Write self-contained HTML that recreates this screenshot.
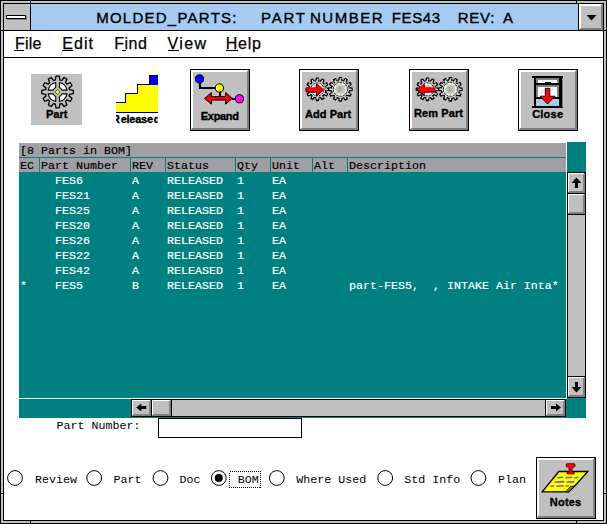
<!DOCTYPE html>
<html><head><meta charset="utf-8"><title>MOLDED_PARTS</title>
<style>
html,body{margin:0;padding:0;background:#fff;width:607px;height:524px;overflow:hidden}
svg{display:block;position:absolute;left:0;top:0}
.sans{font-family:"Liberation Sans",Arial,sans-serif}
.t16{font-size:16px;fill:#000}
.b11{font-size:11px;font-weight:bold;fill:#000;stroke:#000;stroke-width:0.35px}
.mono{font-family:"Liberation Mono","Courier New",monospace;font-size:11.667px;white-space:pre}
.ce{shape-rendering:crispEdges}
</style></head><body>
<svg width="607" height="524" viewBox="0 0 607 524">

<g class="ce">
<rect x="0" y="0" width="607" height="524" fill="#000" />
<rect x="1" y="1" width="605" height="522" fill="#c0c0c0" />
<rect x="3" y="3" width="601" height="518" fill="#000" />
<rect x="4" y="4" width="599" height="516" fill="#fff" />
<rect x="30" y="0" width="1" height="4" fill="#000" />
<rect x="576" y="0" width="1" height="4" fill="#000" />
<rect x="30" y="520" width="1" height="4" fill="#000" />
<rect x="576" y="520" width="1" height="4" fill="#000" />
<rect x="0" y="30" width="4" height="1" fill="#000" />
<rect x="0" y="493" width="4" height="1" fill="#000" />
<rect x="603" y="30" width="4" height="1" fill="#000" />
<rect x="603" y="493" width="4" height="1" fill="#000" />
<rect x="4" y="4" width="26" height="26" fill="#c0c0c0" />
<rect x="30" y="4" width="1" height="26" fill="#000" />
<rect x="31" y="4" width="547" height="26" fill="#a6caf0" />
<rect x="578" y="4" width="1" height="26" fill="#000" />
<rect x="4" y="30" width="599" height="1" fill="#000" />
<rect x="7" y="16" width="20" height="4" fill="#808080" />
<rect x="6" y="15" width="20" height="4" fill="#000" />
<rect x="7" y="16" width="18" height="2" fill="#fff" />
<rect x="579" y="4" width="24" height="26" fill="#c0c0c0" />
<rect x="579" y="4" width="24" height="2" fill="#fff" />
<rect x="579" y="4" width="2" height="26" fill="#fff" />
<rect x="601" y="5" width="2" height="25" fill="#808080" />
<rect x="580" y="28" width="23" height="2" fill="#808080" />
<rect x="602" y="4" width="1" height="1" fill="#808080" />
<rect x="579" y="29" width="1" height="1" fill="#808080" />
</g>
<polygon points="586.5,15 596.5,15 591.5,20.5" fill="#000"/>
<g class="ce">
<rect x="4" y="57" width="599" height="1" fill="#000" />
</g>
<text class="sans t16" x="96.2" y="22.6" textLength="140.3" lengthAdjust="spacing" stroke="#000" stroke-width="0.35" style="font-size:15px">MOLDED_PARTS:</text>
<text class="sans t16" x="261" y="22.6" textLength="44" lengthAdjust="spacing" stroke="#000" stroke-width="0.35" style="font-size:15px">PART</text>
<text class="sans t16" x="310" y="22.6" textLength="72.5" lengthAdjust="spacing" stroke="#000" stroke-width="0.35" style="font-size:15px">NUMBER</text>
<text class="sans t16" x="391.8" y="22.6" textLength="48.2" lengthAdjust="spacing" stroke="#000" stroke-width="0.35" style="font-size:15px">FES43</text>
<text class="sans t16" x="457.7" y="22.6" textLength="36.6" lengthAdjust="spacing" stroke="#000" stroke-width="0.35" style="font-size:15px">REV:</text>
<text class="sans t16" x="503" y="22.6" stroke="#000" stroke-width="0.35" style="font-size:15px">A</text>
<text class="sans t16" x="15" y="48.6" textLength="26.3" lengthAdjust="spacing" stroke="#000" stroke-width="0.25">File</text>
<text class="sans t16" x="62.2" y="48.6" textLength="30.8" lengthAdjust="spacing" stroke="#000" stroke-width="0.25">Edit</text>
<text class="sans t16" x="114.3" y="48.6" textLength="32.5" lengthAdjust="spacing" stroke="#000" stroke-width="0.25">Find</text>
<text class="sans t16" x="167.5" y="48.6" textLength="38.5" lengthAdjust="spacing" stroke="#000" stroke-width="0.25">View</text>
<text class="sans t16" x="225.8" y="48.6" textLength="35" lengthAdjust="spacing" stroke="#000" stroke-width="0.25">Help</text>
<g class="ce">
<rect x="14" y="50" width="10" height="1" fill="#000" />
<rect x="62" y="50" width="11" height="1" fill="#000" />
<rect x="122" y="50" width="4" height="1" fill="#000" />
<rect x="168" y="50" width="11" height="1" fill="#000" />
<rect x="226" y="50" width="12" height="1" fill="#000" />
</g>
<g class="ce">
<rect x="31" y="74" width="51" height="51" fill="#c0c0c0" />
</g>
<polygon points="55.31,80.02 56.02,76.18 59.18,76.18 59.89,80.02 61.61,80.48 64.14,77.51 66.88,79.09 65.57,82.76 66.84,84.03 70.51,82.72 72.09,85.46 69.12,87.99 69.58,89.71 73.42,90.42 73.42,93.58 69.58,94.29 69.12,96.01 72.09,98.54 70.51,101.28 66.84,99.97 65.57,101.24 66.88,104.91 64.14,106.49 61.61,103.52 59.89,103.98 59.18,107.82 56.02,107.82 55.31,103.98 53.59,103.52 51.06,106.49 48.32,104.91 49.63,101.24 48.36,99.97 44.69,101.28 43.11,98.54 46.08,96.01 45.62,94.29 41.78,93.58 41.78,90.42 45.62,89.71 46.08,87.99 43.11,85.46 44.69,82.72 48.36,84.03 49.63,82.76 48.32,79.09 51.06,77.51 53.59,80.48" fill="#c0c0c0" stroke="#000" stroke-width="1.3" stroke-linejoin="round" />
<path d="M67.02,93.83 A9.6,9.6 0 0 1 59.43,101.42 L59.43,96.44 A4.8,4.8 0 0 0 62.04,93.83 Z" fill="#fff" stroke="#000" stroke-width="1.1" stroke-linejoin="round"/>
<path d="M55.77,101.42 A9.6,9.6 0 0 1 48.18,93.83 L53.16,93.83 A4.8,4.8 0 0 0 55.77,96.44 Z" fill="#fff" stroke="#000" stroke-width="1.1" stroke-linejoin="round"/>
<path d="M48.18,90.17 A9.6,9.6 0 0 1 55.77,82.58 L55.77,87.56 A4.8,4.8 0 0 0 53.16,90.17 Z" fill="#fff" stroke="#000" stroke-width="1.1" stroke-linejoin="round"/>
<path d="M59.43,82.58 A9.6,9.6 0 0 1 67.02,90.17 L62.04,90.17 A4.8,4.8 0 0 0 59.43,87.56 Z" fill="#fff" stroke="#000" stroke-width="1.1" stroke-linejoin="round"/>
<polygon points="57.6,89.4 60,92 57.6,94.6 55.2,92" fill="#ffff00" stroke="#404000" stroke-width="0.8"/>
<text class="sans b11" x="46" y="117.6" textLength="21.5" lengthAdjust="spacing" >Part</text>
<g class="ce">
<rect x="116" y="75" width="42" height="38" fill="#fff" />
<polygon points="116,103 126,103 126,94 138,94 138,85 158,85 158,112 116,112" fill="#ffff00"/>
<rect x="150" y="76" width="8" height="9" fill="#0000ff" />
<rect x="116" y="102" width="10" height="1" fill="#000" />
<rect x="125" y="93" width="1" height="10" fill="#000" />
<rect x="125" y="93" width="13" height="1" fill="#000" />
<rect x="137" y="84" width="1" height="10" fill="#000" />
<rect x="137" y="84" width="13" height="1" fill="#000" />
<rect x="149" y="75" width="1" height="10" fill="#000" />
<rect x="149" y="75" width="9" height="1" fill="#000" />
<rect x="116" y="112" width="42" height="1" fill="#000" />
</g>
<clipPath id="rc"><rect x="116" y="113" width="41.8" height="14"/></clipPath>
<g clip-path="url(#rc)">
<text class="sans b11" x="112 120.8 126.5 129.3 135.3 141.1 147 153.8" y="122.8">Released</text>
</g>
<g class="ce">
<rect x="190" y="69" width="60" height="62" fill="#000" />
<rect x="191" y="70" width="58" height="60" fill="#c0c0c0" />
<rect x="191" y="70" width="57" height="2" fill="#fff" />
<rect x="191" y="70" width="2" height="59" fill="#fff" />
<rect x="247" y="71" width="2" height="59" fill="#808080" />
<rect x="192" y="128" width="56" height="2" fill="#808080" />
<rect x="248" y="70" width="1" height="1" fill="#808080" />
<rect x="191" y="129" width="1" height="1" fill="#808080" />
</g>
<g stroke="#000" stroke-width="2" fill="none" class="ce"><path d="M200,80 V88 H216"/><path d="M220,90 V96"/><path d="M232,99 H238"/></g>
<circle cx="199.5" cy="78.9" r="4.1" fill="#0000ff" stroke="#000" stroke-width="1"/>
<circle cx="219.4" cy="88" r="4.1" fill="#ffff00" stroke="#000" stroke-width="1"/>
<circle cx="239.5" cy="98.8" r="4.1" fill="#ff00ff" stroke="#000" stroke-width="1"/>
<polygon points="204.6,98.4 211.4,92.6 211.4,96.7 225.7,96.7 225.7,92.6 232.2,98.4 225.7,104.2 225.7,100.1 211.4,100.1 211.4,104.2" fill="#ff0000" stroke="#000" stroke-width="1" stroke-linejoin="miter"/>
<text class="sans b11" x="200.8" y="119.6" textLength="38.2" lengthAdjust="spacing" >Expand</text>
<g class="ce">
<rect x="299" y="69" width="60" height="62" fill="#000" />
<rect x="300" y="70" width="58" height="60" fill="#c0c0c0" />
<rect x="300" y="70" width="57" height="2" fill="#fff" />
<rect x="300" y="70" width="2" height="59" fill="#fff" />
<rect x="356" y="71" width="2" height="59" fill="#808080" />
<rect x="301" y="128" width="56" height="2" fill="#808080" />
<rect x="357" y="70" width="1" height="1" fill="#808080" />
<rect x="300" y="129" width="1" height="1" fill="#808080" />
</g>
<polygon points="315.91,81.03 316.35,78.15 318.45,78.15 318.89,81.03 320.25,81.40 322.06,79.12 323.89,80.17 322.82,82.88 323.82,83.88 326.53,82.81 327.58,84.64 325.30,86.45 325.67,87.81 328.55,88.25 328.55,90.35 325.67,90.79 325.30,92.15 327.58,93.96 326.53,95.79 323.82,94.72 322.82,95.72 323.89,98.43 322.06,99.48 320.25,97.20 318.89,97.57 318.45,100.45 316.35,100.45 315.91,97.57 314.55,97.20 312.74,99.48 310.91,98.43 311.98,95.72 310.98,94.72 308.27,95.79 307.22,93.96 309.50,92.15 309.13,90.79 306.25,90.35 306.25,88.25 309.13,87.81 309.50,86.45 307.22,84.64 308.27,82.81 310.98,83.88 311.98,82.88 310.91,80.17 312.74,79.12 314.55,81.40" fill="#cccccc" stroke="#000" stroke-width="1.35" stroke-linejoin="round" />
<polygon points="316.26,81.78 316.81,79.09 318.49,79.09 319.04,81.78 320.08,82.06 321.91,80.00 323.36,80.84 322.49,83.45 323.25,84.21 325.86,83.34 326.70,84.79 324.64,86.62 324.92,87.66 327.61,88.21 327.61,89.89 324.92,90.44 324.64,91.48 326.70,93.31 325.86,94.76 323.25,93.89 322.49,94.65 323.36,97.26 321.91,98.10 320.08,96.04 319.04,96.32 318.49,99.01 316.81,99.01 316.26,96.32 315.22,96.04 313.39,98.10 311.94,97.26 312.81,94.65 312.05,93.89 309.44,94.76 308.60,93.31 310.66,91.48 310.38,90.44 307.69,89.89 307.69,88.21 310.38,87.66 310.66,86.62 308.60,84.79 309.44,83.34 312.05,84.21 312.81,83.45 311.94,80.84 313.39,80.00 315.22,82.06" fill="none" stroke="#fff" stroke-width="0.7" stroke-linejoin="round" stroke-dasharray="1.4 2.2"/>
<circle cx="317.4" cy="89.3" r="6.500000000000001" fill="none" stroke="#000" stroke-width="0.9" stroke-dasharray="2.2 1"/>
<circle cx="317.4" cy="89.3" r="5.000000000000001" fill="none" stroke="#fff" stroke-width="1.9" stroke-dasharray="2.36 1.57" stroke-dashoffset="-0.79"/>
<circle cx="317.4" cy="89.3" r="4.000000000000001" fill="#c0c0c0"/>
<polygon points="338.82,80.54 339.30,77.65 341.50,77.65 341.98,80.54 343.41,80.93 345.27,78.66 347.18,79.76 346.14,82.50 347.20,83.56 349.94,82.52 351.04,84.43 348.77,86.29 349.16,87.72 352.05,88.20 352.05,90.40 349.16,90.88 348.77,92.31 351.04,94.17 349.94,96.08 347.20,95.04 346.14,96.10 347.18,98.84 345.27,99.94 343.41,97.67 341.98,98.06 341.50,100.95 339.30,100.95 338.82,98.06 337.39,97.67 335.53,99.94 333.62,98.84 334.66,96.10 333.60,95.04 330.86,96.08 329.76,94.17 332.03,92.31 331.64,90.88 328.75,90.40 328.75,88.20 331.64,87.72 332.03,86.29 329.76,84.43 330.86,82.52 333.60,83.56 334.66,82.50 333.62,79.76 335.53,78.66 337.39,80.93" fill="#cccccc" stroke="#000" stroke-width="1.35" stroke-linejoin="round" />
<polygon points="339.17,81.29 339.77,78.59 341.53,78.59 342.13,81.29 343.25,81.59 345.12,79.55 346.64,80.43 345.81,83.07 346.63,83.89 349.27,83.06 350.15,84.58 348.11,86.45 348.41,87.57 351.11,88.17 351.11,89.93 348.41,90.53 348.11,91.65 350.15,93.52 349.27,95.04 346.63,94.21 345.81,95.03 346.64,97.67 345.12,98.55 343.25,96.51 342.13,96.81 341.53,99.51 339.77,99.51 339.17,96.81 338.05,96.51 336.18,98.55 334.66,97.67 335.49,95.03 334.67,94.21 332.03,95.04 331.15,93.52 333.19,91.65 332.89,90.53 330.19,89.93 330.19,88.17 332.89,87.57 333.19,86.45 331.15,84.58 332.03,83.06 334.67,83.89 335.49,83.07 334.66,80.43 336.18,79.55 338.05,81.59" fill="none" stroke="#fff" stroke-width="0.7" stroke-linejoin="round" stroke-dasharray="1.4 2.2"/>
<circle cx="340.4" cy="89.3" r="7.000000000000001" fill="none" stroke="#000" stroke-width="0.9" stroke-dasharray="2.2 1"/>
<circle cx="340.4" cy="89.3" r="5.500000000000001" fill="none" stroke="#fff" stroke-width="1.9" stroke-dasharray="2.59 1.73" stroke-dashoffset="-0.86"/>
<circle cx="340.4" cy="89.3" r="4.500000000000001" fill="#c0c0c0"/>
<polygon points="339.2,87.5 341.6,89.4 339.2,91.3" fill="#ffff00" stroke="#606000" stroke-width="0.5"/>
<polygon points="306.5,87.6 316.8,87.6 316.8,83.2 323.8,89.5 316.8,95.2 316.8,91.5 306.5,91.5" fill="#000" stroke="#000" stroke-width="1" transform="translate(-0.3,0.6)"/>
<polygon points="306.5,87.6 316.8,87.6 316.8,83.2 323.8,89.5 316.8,95.2 316.8,91.5 306.5,91.5" fill="#ff0000"/>
<text class="sans b11" x="305.1" y="117.8" textLength="46" lengthAdjust="spacing" >Add Part</text>
<g class="ce">
<rect x="409" y="69" width="60" height="62" fill="#000" />
<rect x="410" y="70" width="58" height="60" fill="#c0c0c0" />
<rect x="410" y="70" width="57" height="2" fill="#fff" />
<rect x="410" y="70" width="2" height="59" fill="#fff" />
<rect x="466" y="71" width="2" height="59" fill="#808080" />
<rect x="411" y="128" width="56" height="2" fill="#808080" />
<rect x="467" y="70" width="1" height="1" fill="#808080" />
<rect x="410" y="129" width="1" height="1" fill="#808080" />
</g>
<polygon points="425.91,81.03 426.35,78.15 428.45,78.15 428.89,81.03 430.25,81.40 432.06,79.12 433.89,80.17 432.82,82.88 433.82,83.88 436.53,82.81 437.58,84.64 435.30,86.45 435.67,87.81 438.55,88.25 438.55,90.35 435.67,90.79 435.30,92.15 437.58,93.96 436.53,95.79 433.82,94.72 432.82,95.72 433.89,98.43 432.06,99.48 430.25,97.20 428.89,97.57 428.45,100.45 426.35,100.45 425.91,97.57 424.55,97.20 422.74,99.48 420.91,98.43 421.98,95.72 420.98,94.72 418.27,95.79 417.22,93.96 419.50,92.15 419.13,90.79 416.25,90.35 416.25,88.25 419.13,87.81 419.50,86.45 417.22,84.64 418.27,82.81 420.98,83.88 421.98,82.88 420.91,80.17 422.74,79.12 424.55,81.40" fill="#cccccc" stroke="#000" stroke-width="1.35" stroke-linejoin="round" />
<polygon points="426.26,81.78 426.81,79.09 428.49,79.09 429.04,81.78 430.08,82.06 431.91,80.00 433.36,80.84 432.49,83.45 433.25,84.21 435.86,83.34 436.70,84.79 434.64,86.62 434.92,87.66 437.61,88.21 437.61,89.89 434.92,90.44 434.64,91.48 436.70,93.31 435.86,94.76 433.25,93.89 432.49,94.65 433.36,97.26 431.91,98.10 430.08,96.04 429.04,96.32 428.49,99.01 426.81,99.01 426.26,96.32 425.22,96.04 423.39,98.10 421.94,97.26 422.81,94.65 422.05,93.89 419.44,94.76 418.60,93.31 420.66,91.48 420.38,90.44 417.69,89.89 417.69,88.21 420.38,87.66 420.66,86.62 418.60,84.79 419.44,83.34 422.05,84.21 422.81,83.45 421.94,80.84 423.39,80.00 425.22,82.06" fill="none" stroke="#fff" stroke-width="0.7" stroke-linejoin="round" stroke-dasharray="1.4 2.2"/>
<circle cx="427.4" cy="89.3" r="6.500000000000001" fill="none" stroke="#000" stroke-width="0.9" stroke-dasharray="2.2 1"/>
<circle cx="427.4" cy="89.3" r="5.000000000000001" fill="none" stroke="#fff" stroke-width="1.9" stroke-dasharray="2.36 1.57" stroke-dashoffset="-0.79"/>
<circle cx="427.4" cy="89.3" r="4.000000000000001" fill="#c0c0c0"/>
<polygon points="448.82,80.54 449.30,77.65 451.50,77.65 451.98,80.54 453.41,80.93 455.27,78.66 457.18,79.76 456.14,82.50 457.20,83.56 459.94,82.52 461.04,84.43 458.77,86.29 459.16,87.72 462.05,88.20 462.05,90.40 459.16,90.88 458.77,92.31 461.04,94.17 459.94,96.08 457.20,95.04 456.14,96.10 457.18,98.84 455.27,99.94 453.41,97.67 451.98,98.06 451.50,100.95 449.30,100.95 448.82,98.06 447.39,97.67 445.53,99.94 443.62,98.84 444.66,96.10 443.60,95.04 440.86,96.08 439.76,94.17 442.03,92.31 441.64,90.88 438.75,90.40 438.75,88.20 441.64,87.72 442.03,86.29 439.76,84.43 440.86,82.52 443.60,83.56 444.66,82.50 443.62,79.76 445.53,78.66 447.39,80.93" fill="#cccccc" stroke="#000" stroke-width="1.35" stroke-linejoin="round" />
<polygon points="449.17,81.29 449.77,78.59 451.53,78.59 452.13,81.29 453.25,81.59 455.12,79.55 456.64,80.43 455.81,83.07 456.63,83.89 459.27,83.06 460.15,84.58 458.11,86.45 458.41,87.57 461.11,88.17 461.11,89.93 458.41,90.53 458.11,91.65 460.15,93.52 459.27,95.04 456.63,94.21 455.81,95.03 456.64,97.67 455.12,98.55 453.25,96.51 452.13,96.81 451.53,99.51 449.77,99.51 449.17,96.81 448.05,96.51 446.18,98.55 444.66,97.67 445.49,95.03 444.67,94.21 442.03,95.04 441.15,93.52 443.19,91.65 442.89,90.53 440.19,89.93 440.19,88.17 442.89,87.57 443.19,86.45 441.15,84.58 442.03,83.06 444.67,83.89 445.49,83.07 444.66,80.43 446.18,79.55 448.05,81.59" fill="none" stroke="#fff" stroke-width="0.7" stroke-linejoin="round" stroke-dasharray="1.4 2.2"/>
<circle cx="450.4" cy="89.3" r="7.000000000000001" fill="none" stroke="#000" stroke-width="0.9" stroke-dasharray="2.2 1"/>
<circle cx="450.4" cy="89.3" r="5.500000000000001" fill="none" stroke="#fff" stroke-width="1.9" stroke-dasharray="2.59 1.73" stroke-dashoffset="-0.86"/>
<circle cx="450.4" cy="89.3" r="4.500000000000001" fill="#c0c0c0"/>
<polygon points="449.2,87.5 451.6,89.4 449.2,91.3" fill="#ffff00" stroke="#606000" stroke-width="0.5"/>
<polygon points="435,87.6 424.5,87.6 424.5,83.6 417.3,89.4 424.5,95 424.5,91.5 435,91.5" fill="#000" stroke="#000" stroke-width="1" transform="translate(-0.3,0.6)"/>
<polygon points="435,87.6 424.5,87.6 424.5,83.6 417.3,89.4 424.5,95 424.5,91.5 435,91.5" fill="#ff0000"/>
<text class="sans b11" x="414" y="116.8" textLength="49" lengthAdjust="spacing" >Rem Part</text>
<g class="ce">
<rect x="518" y="69" width="60" height="62" fill="#000" />
<rect x="519" y="70" width="58" height="60" fill="#c0c0c0" />
<rect x="519" y="70" width="57" height="2" fill="#fff" />
<rect x="519" y="70" width="2" height="59" fill="#fff" />
<rect x="575" y="71" width="2" height="59" fill="#808080" />
<rect x="520" y="128" width="56" height="2" fill="#808080" />
<rect x="576" y="70" width="1" height="1" fill="#808080" />
<rect x="519" y="129" width="1" height="1" fill="#808080" />
</g>
<g class="ce">
<rect x="532" y="76" width="31" height="2" fill="#000" />
<rect x="532" y="106" width="31" height="2" fill="#000" />
<rect x="562" y="78" width="1" height="29" fill="#808080" />
<rect x="534" y="78" width="28" height="28" fill="#000" />
<rect x="536" y="78" width="23" height="28" fill="#808080" />
<rect x="538" y="80" width="19" height="3" fill="#fff" />
<rect x="545" y="82" width="6" height="1" fill="#000" />
<rect x="536" y="83" width="23" height="2" fill="#000" />
<rect x="538" y="87" width="19" height="10" fill="#fff" />
<rect x="536" y="97" width="23" height="2" fill="#000" />
<rect x="536" y="99" width="23" height="7" fill="#a6caf0" />
</g>
<g stroke="#a6caf0" stroke-width="0.8"><line x1="541.5" y1="82.8" x2="543.5" y2="80.2"/><line x1="551" y1="82.8" x2="553.5" y2="80"/><line x1="540.5" y1="93.5" x2="543.5" y2="90"/><line x1="551" y1="91.5" x2="553.5" y2="88.5"/></g>
<polygon points="545.3,88.3 549.8,88.3 549.8,96.2 555,96.2 547.5,104 540,96.2 545.3,96.2" fill="#ff0000" stroke="#000" stroke-width="0.9" stroke-linejoin="miter"/>
<text class="sans b11" x="532.2" y="118.2" textLength="30.8" lengthAdjust="spacing" >Close</text>
<g class="ce">
<rect x="19" y="143" width="567" height="275" fill="#008080" />
<rect x="567" y="142" width="19" height="2" fill="#008080" />
<rect x="19" y="143" width="547" height="29" fill="#a0a0a4" />
<rect x="19" y="157" width="547" height="1" fill="#008080" />
<rect x="39" y="158" width="1" height="14" fill="#008080" />
<rect x="130" y="158" width="1" height="14" fill="#008080" />
<rect x="165" y="158" width="1" height="14" fill="#008080" />
<rect x="235" y="158" width="1" height="14" fill="#008080" />
<rect x="270" y="158" width="1" height="14" fill="#008080" />
<rect x="312" y="158" width="1" height="14" fill="#008080" />
<rect x="347" y="158" width="1" height="14" fill="#008080" />
<rect x="566" y="142" width="1" height="257" fill="#fff" />
<rect x="19" y="398" width="548" height="1" fill="#fff" />
</g>
<text class="mono" x="20" y="154" fill="#000" stroke="#000" stroke-width="0.18" xml:space="preserve">[8 Parts in BOM]</text>
<text class="mono" x="20" y="169" fill="#000" stroke="#000" stroke-width="0.18" xml:space="preserve">EC</text>
<text class="mono" x="41" y="169" fill="#000" stroke="#000" stroke-width="0.18" xml:space="preserve">Part Number</text>
<text class="mono" x="132" y="169" fill="#000" stroke="#000" stroke-width="0.18" xml:space="preserve">REV</text>
<text class="mono" x="167" y="169" fill="#000" stroke="#000" stroke-width="0.18" xml:space="preserve">Status</text>
<text class="mono" x="237" y="169" fill="#000" stroke="#000" stroke-width="0.18" xml:space="preserve">Qty</text>
<text class="mono" x="272" y="169" fill="#000" stroke="#000" stroke-width="0.18" xml:space="preserve">Unit</text>
<text class="mono" x="314" y="169" fill="#000" stroke="#000" stroke-width="0.18" xml:space="preserve">Alt</text>
<text class="mono" x="349" y="169" fill="#000" stroke="#000" stroke-width="0.18" xml:space="preserve">Description</text>
<text class="mono" x="55" y="184" fill="#fff" stroke="#fff" stroke-width="0.18" xml:space="preserve">FES6</text>
<text class="mono" x="132" y="184" fill="#fff" stroke="#fff" stroke-width="0.18" xml:space="preserve">A</text>
<text class="mono" x="167" y="184" fill="#fff" stroke="#fff" stroke-width="0.18" xml:space="preserve">RELEASED</text>
<text class="mono" x="237" y="184" fill="#fff" stroke="#fff" stroke-width="0.18" xml:space="preserve">1</text>
<text class="mono" x="272" y="184" fill="#fff" stroke="#fff" stroke-width="0.18" xml:space="preserve">EA</text>
<text class="mono" x="55" y="199" fill="#fff" stroke="#fff" stroke-width="0.18" xml:space="preserve">FES21</text>
<text class="mono" x="132" y="199" fill="#fff" stroke="#fff" stroke-width="0.18" xml:space="preserve">A</text>
<text class="mono" x="167" y="199" fill="#fff" stroke="#fff" stroke-width="0.18" xml:space="preserve">RELEASED</text>
<text class="mono" x="237" y="199" fill="#fff" stroke="#fff" stroke-width="0.18" xml:space="preserve">1</text>
<text class="mono" x="272" y="199" fill="#fff" stroke="#fff" stroke-width="0.18" xml:space="preserve">EA</text>
<text class="mono" x="55" y="214" fill="#fff" stroke="#fff" stroke-width="0.18" xml:space="preserve">FES25</text>
<text class="mono" x="132" y="214" fill="#fff" stroke="#fff" stroke-width="0.18" xml:space="preserve">A</text>
<text class="mono" x="167" y="214" fill="#fff" stroke="#fff" stroke-width="0.18" xml:space="preserve">RELEASED</text>
<text class="mono" x="237" y="214" fill="#fff" stroke="#fff" stroke-width="0.18" xml:space="preserve">1</text>
<text class="mono" x="272" y="214" fill="#fff" stroke="#fff" stroke-width="0.18" xml:space="preserve">EA</text>
<text class="mono" x="55" y="229" fill="#fff" stroke="#fff" stroke-width="0.18" xml:space="preserve">FES20</text>
<text class="mono" x="132" y="229" fill="#fff" stroke="#fff" stroke-width="0.18" xml:space="preserve">A</text>
<text class="mono" x="167" y="229" fill="#fff" stroke="#fff" stroke-width="0.18" xml:space="preserve">RELEASED</text>
<text class="mono" x="237" y="229" fill="#fff" stroke="#fff" stroke-width="0.18" xml:space="preserve">1</text>
<text class="mono" x="272" y="229" fill="#fff" stroke="#fff" stroke-width="0.18" xml:space="preserve">EA</text>
<text class="mono" x="55" y="244" fill="#fff" stroke="#fff" stroke-width="0.18" xml:space="preserve">FES26</text>
<text class="mono" x="132" y="244" fill="#fff" stroke="#fff" stroke-width="0.18" xml:space="preserve">A</text>
<text class="mono" x="167" y="244" fill="#fff" stroke="#fff" stroke-width="0.18" xml:space="preserve">RELEASED</text>
<text class="mono" x="237" y="244" fill="#fff" stroke="#fff" stroke-width="0.18" xml:space="preserve">1</text>
<text class="mono" x="272" y="244" fill="#fff" stroke="#fff" stroke-width="0.18" xml:space="preserve">EA</text>
<text class="mono" x="55" y="259" fill="#fff" stroke="#fff" stroke-width="0.18" xml:space="preserve">FES22</text>
<text class="mono" x="132" y="259" fill="#fff" stroke="#fff" stroke-width="0.18" xml:space="preserve">A</text>
<text class="mono" x="167" y="259" fill="#fff" stroke="#fff" stroke-width="0.18" xml:space="preserve">RELEASED</text>
<text class="mono" x="237" y="259" fill="#fff" stroke="#fff" stroke-width="0.18" xml:space="preserve">1</text>
<text class="mono" x="272" y="259" fill="#fff" stroke="#fff" stroke-width="0.18" xml:space="preserve">EA</text>
<text class="mono" x="55" y="274" fill="#fff" stroke="#fff" stroke-width="0.18" xml:space="preserve">FES42</text>
<text class="mono" x="132" y="274" fill="#fff" stroke="#fff" stroke-width="0.18" xml:space="preserve">A</text>
<text class="mono" x="167" y="274" fill="#fff" stroke="#fff" stroke-width="0.18" xml:space="preserve">RELEASED</text>
<text class="mono" x="237" y="274" fill="#fff" stroke="#fff" stroke-width="0.18" xml:space="preserve">1</text>
<text class="mono" x="272" y="274" fill="#fff" stroke="#fff" stroke-width="0.18" xml:space="preserve">EA</text>
<text class="mono" x="55" y="289" fill="#fff" stroke="#fff" stroke-width="0.18" xml:space="preserve">FES5</text>
<text class="mono" x="132" y="289" fill="#fff" stroke="#fff" stroke-width="0.18" xml:space="preserve">B</text>
<text class="mono" x="167" y="289" fill="#fff" stroke="#fff" stroke-width="0.18" xml:space="preserve">RELEASED</text>
<text class="mono" x="237" y="289" fill="#fff" stroke="#fff" stroke-width="0.18" xml:space="preserve">1</text>
<text class="mono" x="272" y="289" fill="#fff" stroke="#fff" stroke-width="0.18" xml:space="preserve">EA</text>
<text class="mono" x="20" y="289" fill="#fff" stroke="#fff" stroke-width="0.18" xml:space="preserve">*</text>
<text class="mono" x="349" y="289" fill="#fff" stroke="#fff" stroke-width="0.18" xml:space="preserve">part-FES5,  , INTAKE Air Inta*</text>
<g class="ce">
<rect x="567" y="172" width="19" height="226" fill="#000" />
<rect x="568" y="173" width="17" height="224" fill="#c0c0c0" />
<rect x="568" y="173" width="17" height="20" fill="#c0c0c0" />
<rect x="568" y="173" width="16" height="1" fill="#fff" />
<rect x="568" y="173" width="1" height="19" fill="#fff" />
<rect x="583" y="174" width="2" height="19" fill="#808080" />
<rect x="569" y="191" width="16" height="2" fill="#808080" />
<rect x="584" y="173" width="1" height="1" fill="#808080" />
<rect x="568" y="192" width="1" height="1" fill="#808080" />
<rect x="568" y="193" width="17" height="1" fill="#000" />
<rect x="568" y="194" width="17" height="20" fill="#c0c0c0" />
<rect x="568" y="194" width="16" height="1" fill="#fff" />
<rect x="568" y="194" width="1" height="19" fill="#fff" />
<rect x="583" y="195" width="2" height="19" fill="#808080" />
<rect x="569" y="212" width="16" height="2" fill="#808080" />
<rect x="584" y="194" width="1" height="1" fill="#808080" />
<rect x="568" y="213" width="1" height="1" fill="#808080" />
<rect x="568" y="214" width="17" height="1" fill="#000" />
<rect x="568" y="376" width="17" height="1" fill="#000" />
<rect x="568" y="377" width="17" height="20" fill="#c0c0c0" />
<rect x="568" y="377" width="16" height="1" fill="#fff" />
<rect x="568" y="377" width="1" height="19" fill="#fff" />
<rect x="583" y="378" width="2" height="19" fill="#808080" />
<rect x="569" y="395" width="16" height="2" fill="#808080" />
<rect x="584" y="377" width="1" height="1" fill="#808080" />
<rect x="568" y="396" width="1" height="1" fill="#808080" />
<rect x="131" y="399" width="435" height="18" fill="#000" />
<rect x="132" y="400" width="433" height="16" fill="#c0c0c0" />
<rect x="132" y="400" width="19" height="16" fill="#c0c0c0" />
<rect x="132" y="400" width="18" height="1" fill="#fff" />
<rect x="132" y="400" width="1" height="15" fill="#fff" />
<rect x="149" y="401" width="2" height="15" fill="#808080" />
<rect x="133" y="414" width="18" height="2" fill="#808080" />
<rect x="150" y="400" width="1" height="1" fill="#808080" />
<rect x="132" y="415" width="1" height="1" fill="#808080" />
<rect x="151" y="400" width="1" height="16" fill="#000" />
<rect x="152" y="400" width="19" height="16" fill="#c0c0c0" />
<rect x="152" y="400" width="18" height="1" fill="#fff" />
<rect x="152" y="400" width="1" height="15" fill="#fff" />
<rect x="169" y="401" width="2" height="15" fill="#808080" />
<rect x="153" y="414" width="18" height="2" fill="#808080" />
<rect x="170" y="400" width="1" height="1" fill="#808080" />
<rect x="152" y="415" width="1" height="1" fill="#808080" />
<rect x="171" y="400" width="1" height="16" fill="#000" />
<rect x="545" y="400" width="1" height="16" fill="#000" />
<rect x="546" y="400" width="19" height="16" fill="#c0c0c0" />
<rect x="546" y="400" width="18" height="1" fill="#fff" />
<rect x="546" y="400" width="1" height="15" fill="#fff" />
<rect x="563" y="401" width="2" height="15" fill="#808080" />
<rect x="547" y="414" width="18" height="2" fill="#808080" />
<rect x="564" y="400" width="1" height="1" fill="#808080" />
<rect x="546" y="415" width="1" height="1" fill="#808080" />
</g>
<polygon points="576.5,177.5 581.5,183 578,183 578,188 575,188 575,183 571.5,183" fill="#000"/>
<polygon points="576.5,392.5 581.5,387 578,387 578,382 575,382 575,387 571.5,387" fill="#000"/>
<polygon points="136.3,407.5 141.3,403.5 141.3,406 146.3,406 146.3,409 141.3,409 141.3,411.5" fill="#000"/>
<polygon points="561,407.5 556,403.5 556,406 551,406 551,409 556,409 556,411.5" fill="#000"/>
<text class="mono" x="56.5" y="429" fill="#000" xml:space="preserve">Part Number:</text>
<g class="ce">
<rect x="158" y="418" width="144" height="20" fill="#000" />
<rect x="159" y="419" width="142" height="18" fill="#fff" />
</g>
<circle cx="15" cy="478" r="7.4" fill="#fff" stroke="#000" stroke-width="1"/>
<text class="mono" x="35" y="483" fill="#000" xml:space="preserve">Review</text>
<circle cx="94.2" cy="478" r="7.4" fill="#fff" stroke="#000" stroke-width="1"/>
<text class="mono" x="113.5" y="483" fill="#000" xml:space="preserve">Part</text>
<circle cx="160.5" cy="478" r="7.4" fill="#fff" stroke="#000" stroke-width="1"/>
<text class="mono" x="179.5" y="483" fill="#000" xml:space="preserve">Doc</text>
<circle cx="218.8" cy="478" r="7.4" fill="#fff" stroke="#000" stroke-width="1"/>
<text class="mono" x="237.7" y="483" fill="#000" xml:space="preserve">BOM</text>
<circle cx="276.8" cy="478" r="7.4" fill="#fff" stroke="#000" stroke-width="1"/>
<text class="mono" x="296.3" y="483" fill="#000" xml:space="preserve">Where Used</text>
<circle cx="385.2" cy="478" r="7.4" fill="#fff" stroke="#000" stroke-width="1"/>
<text class="mono" x="404.3" y="483" fill="#000" xml:space="preserve">Std Info</text>
<circle cx="478.4" cy="478" r="7.4" fill="#fff" stroke="#000" stroke-width="1"/>
<text class="mono" x="498" y="483" fill="#000" xml:space="preserve">Plan</text>
<circle cx="218.8" cy="478" r="4" fill="#000"/>
<rect x="229.5" y="471.5" width="31" height="16" fill="none" stroke="#000" stroke-width="1" stroke-dasharray="1 1" class="ce"/>
<g class="ce">
<rect x="536" y="457" width="60" height="62" fill="#000" />
<rect x="537" y="458" width="58" height="60" fill="#c0c0c0" />
<rect x="537" y="458" width="57" height="2" fill="#fff" />
<rect x="537" y="458" width="2" height="59" fill="#fff" />
<rect x="593" y="459" width="2" height="59" fill="#808080" />
<rect x="538" y="516" width="56" height="2" fill="#808080" />
<rect x="594" y="458" width="1" height="1" fill="#808080" />
<rect x="537" y="517" width="1" height="1" fill="#808080" />
</g>
<polygon points="558.8,471.5 587.8,471.5 575,485.8 568.6,491.8 542.2,491.8" fill="#ffff00" stroke="#000" stroke-width="1.3" stroke-linejoin="miter"/>
<polygon points="565.5,491.8 570.5,486.6 575.2,485.6 568.8,491.8" fill="#808000" stroke="#000" stroke-width="0.7"/>
<g stroke="#6868a8" stroke-width="1.6">
<line x1="557.4" y1="477.8" x2="562.9" y2="477.2"/>
<line x1="565.7" y1="477.8" x2="572.1" y2="477.2"/>
<line x1="574.4" y1="477.8" x2="578.6" y2="477.2"/>
<line x1="554.6" y1="482.2" x2="564.3" y2="481.59999999999997"/>
<line x1="566.6" y1="482.2" x2="574.4" y2="481.59999999999997"/>
<line x1="550.5" y1="486.3" x2="554.1" y2="485.7"/>
<line x1="556.5" y1="486.3" x2="563.8" y2="485.7"/>
<line x1="565.7" y1="486.3" x2="568.9" y2="485.7"/>
</g>
<path d="M567.3,463.6 h6.6 q1.2,0 1.2,1.4 v0.8 q0,1.4 -1.2,1.4 h-1.7 v4.9 h2 v2 h-7.2 v-2 h2 v-4.9 h-1.7 q-1.2,0 -1.2,-1.4 v-0.8 q0,-1.4 1.2,-1.4 z" fill="#ff0000" stroke="#000" stroke-width="0.6"/>
<text class="sans b11" x="549.8" y="506" textLength="31.4" lengthAdjust="spacing" >Notes</text>
</svg></body></html>
